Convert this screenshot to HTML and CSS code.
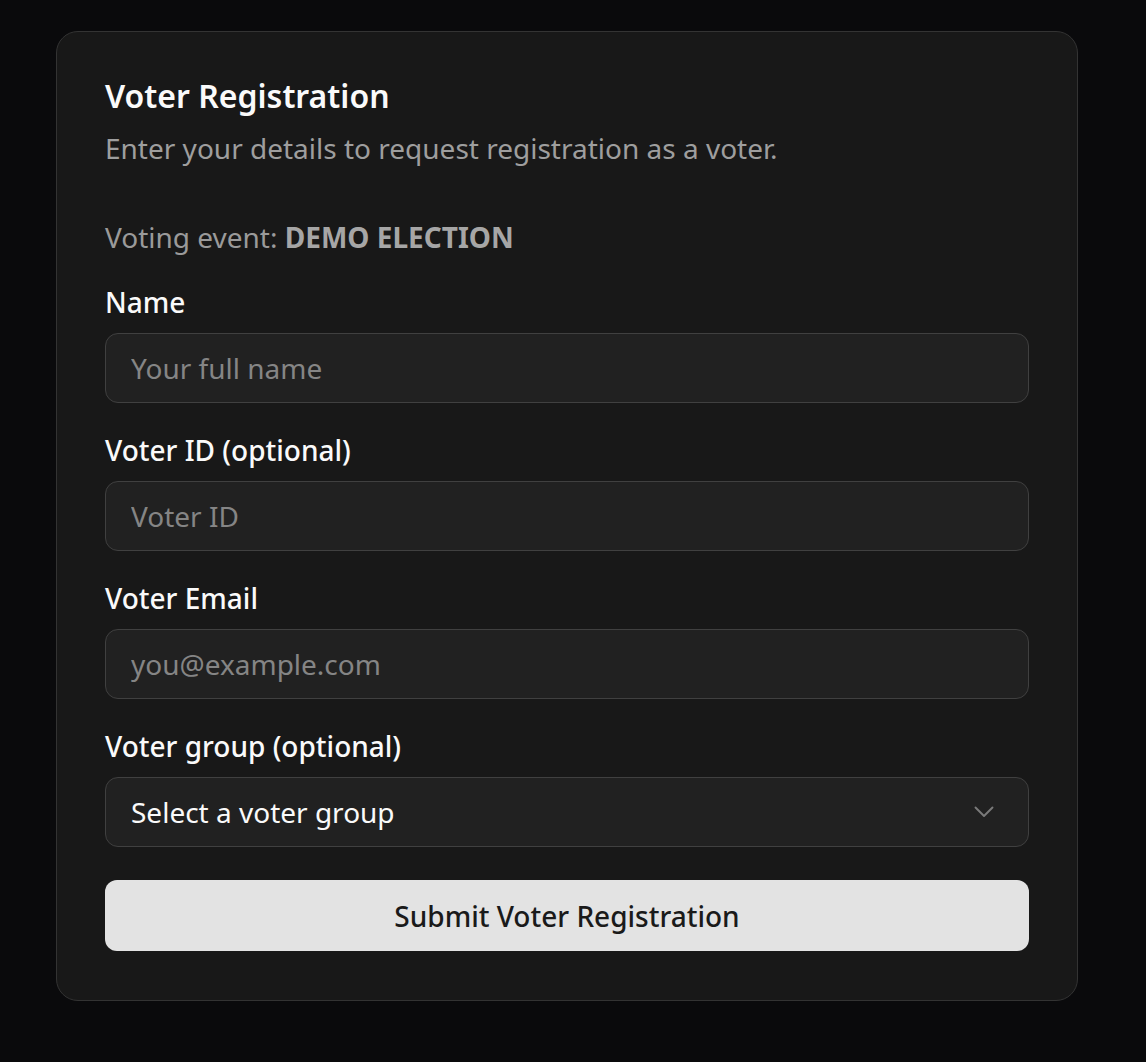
FILE: index.html
```html
<!DOCTYPE html>
<html lang="en">
<head>
<meta charset="utf-8">
<title>Voter Registration</title>
<link rel="stylesheet" href="styles.css">
</head>
<body>
<main class="page">
  <section class="card">
    <header class="card-header">
      <h1 class="card-title">Voter Registration</h1>
      <p class="card-desc">Enter your details to request registration as a voter.</p>
    </header>
    <form class="form">
      <p class="event">Voting event: <strong>DEMO ELECTION</strong></p>
      <div class="field">
        <label class="label" for="name">Name</label>
        <input class="input" id="name" type="text" placeholder="Your full name">
      </div>
      <div class="field">
        <label class="label" for="vid">Voter ID (optional)</label>
        <input class="input" id="vid" type="text" placeholder="Voter ID">
      </div>
      <div class="field">
        <label class="label" for="email">Voter Email</label>
        <input class="input" id="email" type="email" placeholder="you@example.com">
      </div>
      <div class="field">
        <label class="label" for="group">Voter group (optional)</label>
        <button class="select" id="group" type="button">
          <span>Select a voter group</span>
          <svg class="chev" width="20" height="12" viewBox="0 0 20 12" aria-hidden="true">
            <polyline points="1.5,1.5 10,10 18.5,1.5" fill="none" stroke="#7a7a7a" stroke-width="1.9" stroke-linecap="round" stroke-linejoin="round"/>
          </svg>
        </button>
      </div>
      <button class="submit" type="button">Submit Voter Registration</button>
    </form>
  </section>
</main>
</body>
</html>
```
FILE: styles.css
```css
* { box-sizing: border-box; }
html, body {
  margin: 0;
  padding: 0;
  background: #0a0a0c;
  font-family: "Noto Sans", "Open Sans", sans-serif;
}
.page {
  padding: 31px 0 40px 56px;
}
.card {
  width: 1022px;
  background: #181818;
  border: 1px solid #333333;
  border-radius: 22px;
  padding: 48px 48px 49px;
}
.card-header {
  display: flex;
  flex-direction: column;
}
.card-title {
  margin: 0;
  color: #fafafa;
  font-size: 32px;
  line-height: 32px;
  font-weight: 600;
}
.card-desc {
  margin: 15px 0 0;
  color: #9e9e9e;
  font-size: 28px;
  line-height: 42px;
}
.form {
  display: flex;
  flex-direction: column;
  gap: 33px;
}
.event {
  margin: 47px 0 -3px;
  color: #9a9a9a;
  font-size: 28px;
  line-height: 42px;
}
.event strong {
  color: #a6a6a6;
  font-weight: 700;
}
.field {
  display: flex;
  flex-direction: column;
  gap: 17px;
}
.label {
  color: #fafafa;
  font-size: 28px;
  line-height: 28px;
  font-weight: 500;
}
.input, .select {
  height: 70px;
  width: 100%;
  background: #212121;
  border: 1.5px solid #404040;
  border-radius: 13px;
  padding: 0 24px 0 25px;
  font-family: inherit;
  font-size: 28px;
  color: #fafafa;
  outline: none;
}
.input::placeholder {
  color: #858585;
}
.select {
  display: flex;
  align-items: center;
  justify-content: space-between;
  text-align: left;
  padding-right: 34px;
  cursor: pointer;
}
.chev { display: block; }
.submit {
  height: 71px;
  width: 100%;
  border: none;
  border-radius: 12px;
  background: #e3e3e3;
  color: #1a1a1a;
  font-family: inherit;
  font-size: 28px;
  font-weight: 500;
  cursor: pointer;
}
```
